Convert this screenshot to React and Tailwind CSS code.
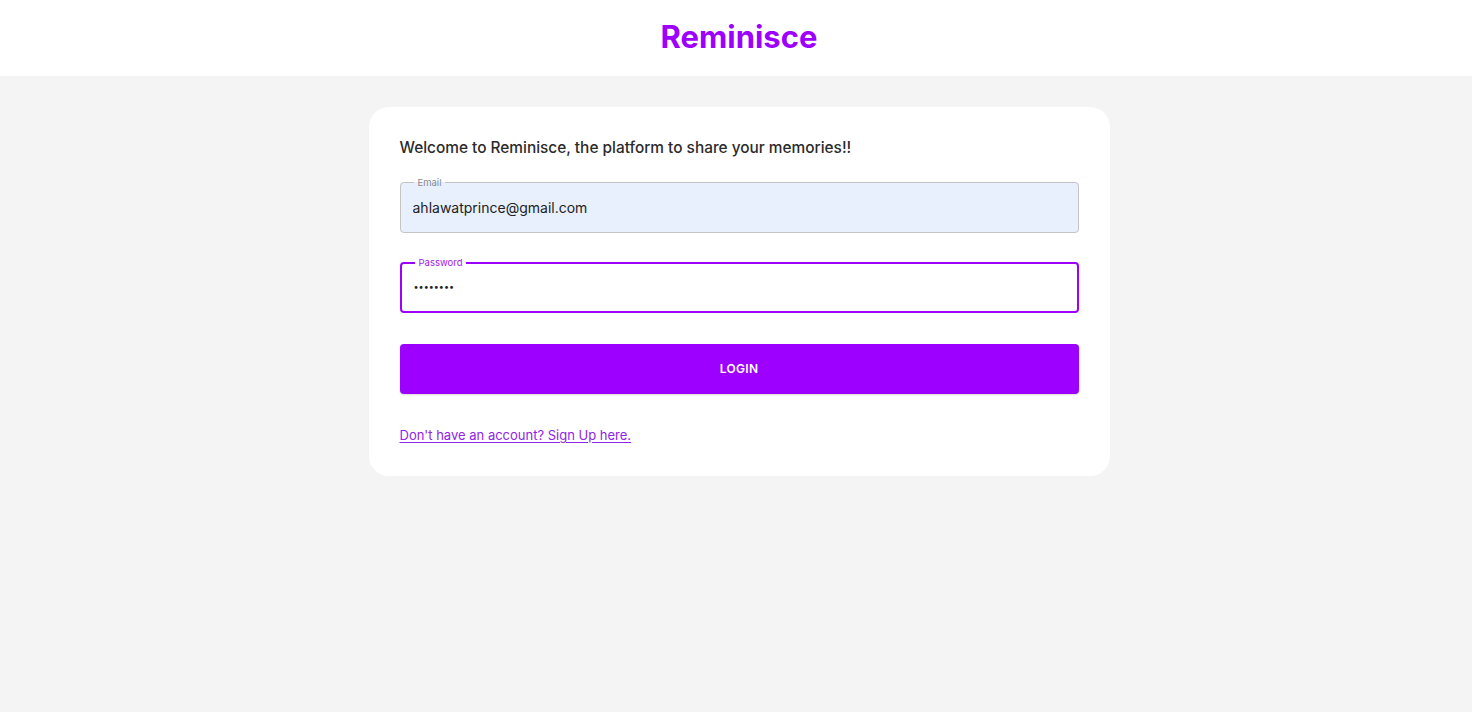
import { useState } from 'react';

const font = { fontFamily: 'Inter, "Noto Sans", sans-serif' };

function OutlinedField({ label, type, value, onChange, focused, filled }) {
  return (
    <fieldset
      className={`relative h-[56px] rounded-[4px] px-[12px] ${
        focused ? 'border-2 border-[#9d00ff]' : 'border border-[#c4c4c4]'
      } ${filled ? 'bg-[#e8f0fe]' : 'bg-white'}`}
    >
      <legend
        className={`ml-[1px] px-[4px] text-[9.5px] leading-[11px] ${
          focused ? 'text-[#a020f0]' : 'text-[#8a8a8a]'
        }`}
      >
        {label}
      </legend>
      <input
        type={type}
        value={value}
        onChange={onChange}
        autoFocus={focused}
        className={`w-full bg-transparent outline-none caret-[#222] text-[#222] ${
          type === 'password' ? 'pt-[9px] text-[9px] h-[27px]' : 'pt-[9px] text-[14px]'
        }`}
      />
    </fieldset>
  );
}

export default function App() {
  const [email, setEmail] = useState('ahlawatprince@gmail.com');
  const [password, setPassword] = useState('12345678');

  return (
    <div className="min-h-screen bg-[#f4f4f4] flex flex-col" style={font}>
      {/* Header */}
      <header className="h-[76px] bg-white flex items-center justify-center pl-[6px]">
        <h1 className="text-[31px] font-bold text-[#9d00ff] -mt-[2px]">Reminisce</h1>
      </header>

      {/* Login card */}
      <main className="flex justify-center pt-[31px] pl-[6px]">
        <div className="w-[741px] bg-white rounded-[20px] px-[31px] pt-[31px] pb-[33px]">
          <p className="text-[15.4px] font-medium text-[#2b2b2b] leading-[20px]">
            Welcome to Reminisce, the platform to share your memories!!
          </p>

          <div className="mt-[19px] flex flex-col gap-[24px]">
            <OutlinedField label="Email" type="email" value={email} onChange={e => setEmail(e.target.value)} filled />
            <OutlinedField label="Password" type="password" value={password} onChange={e => setPassword(e.target.value)} focused />
          </div>

          <button className="mt-[31px] w-full h-[50px] rounded-[4px] bg-[#9d00ff] text-white text-[12px] font-semibold tracking-wide shadow-[0_1px_2px_rgba(0,0,0,0.15)]">
            LOGIN
          </button>

          <a href="#" className="block mt-[33px] text-[13px] text-[#8e24e8] underline underline-offset-2 leading-[16px] w-fit">
            Don't have an account? Sign Up here.
          </a>
        </div>
      </main>
    </div>
  );
}
